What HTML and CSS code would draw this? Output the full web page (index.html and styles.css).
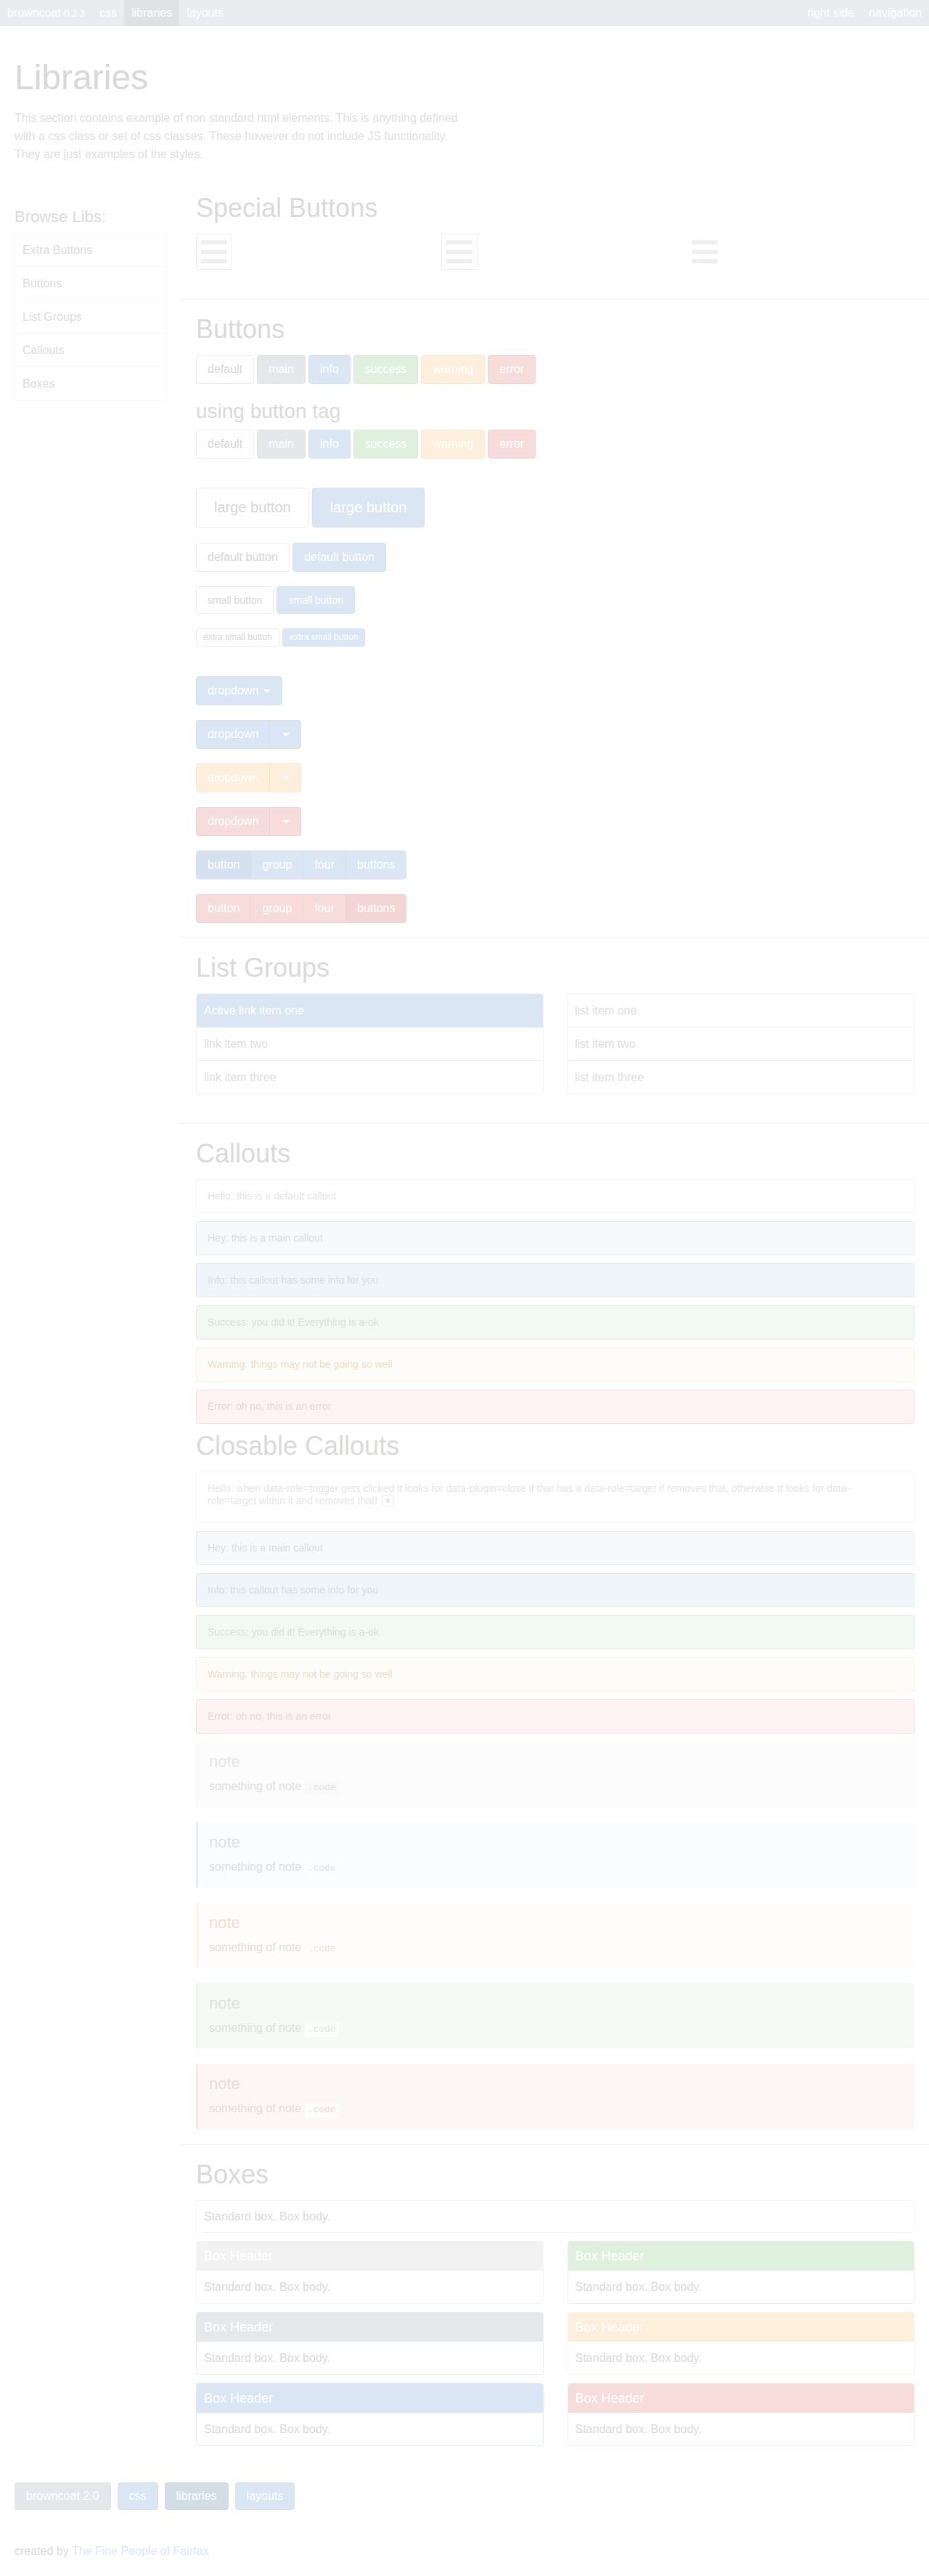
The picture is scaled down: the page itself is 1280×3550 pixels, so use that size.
FILE: index.html
```html
<!DOCTYPE html>
<html lang="en">
<head>
<meta charset="utf-8">
<title>Libraries - browncoat</title>
<link rel="stylesheet" href="styles.css">
</head>
<body>
<nav class="topbar">
  <div class="nav-group">
    <a class="nav-item brand" href="#">browncoat <small>0.2.3</small></a>
    <a class="nav-item" href="#">css</a>
    <a class="nav-item active" href="#">libraries</a>
    <a class="nav-item" href="#">layouts</a>
  </div>
  <div class="nav-group">
    <a class="nav-item" href="#">right side</a>
    <a class="nav-item" href="#">navigation</a>
  </div>
</nav>

<header class="intro">
  <h1 class="page-title">Libraries</h1>
  <p class="lead">This section contains example of non standard html elements. This is anything defined with a css class or set of css classes. These however do not include JS functionality. They are just examples of the styles.</p>
</header>

<div class="layout">
  <aside class="sidebar">
    <h3 class="side-title">Browse Libs:</h3>
    <ul class="side-list">
      <li><a href="#">Extra Buttons</a></li>
      <li><a href="#">Buttons</a></li>
      <li><a href="#">List Groups</a></li>
      <li><a href="#">Callouts</a></li>
      <li><a href="#">Boxes</a></li>
    </ul>
  </aside>

  <main class="content">
    <section class="section sec-special">
      <h2 class="sec-title">Special Buttons</h2>
      <div class="icon-row">
        <div class="icon-cell"><span class="burger bordered"><i></i><i></i><i></i></span></div>
        <div class="icon-cell"><span class="burger bordered"><i></i><i></i><i></i></span></div>
        <div class="icon-cell"><span class="burger"><i></i><i></i><i></i></span></div>
      </div>
    </section>

    <section class="section sec-buttons">
      <h2 class="sec-title">Buttons</h2>
      <div class="btn-row row-first">
        <a class="btn" href="#">default</a>
        <a class="btn btn-main" href="#">main</a>
        <a class="btn btn-info" href="#">info</a>
        <a class="btn btn-success" href="#">success</a>
        <a class="btn btn-warning" href="#">warning</a>
        <a class="btn btn-error" href="#">error</a>
      </div>
      <h3 class="sub-title">using button tag</h3>
      <div class="btn-row row-tag">
        <button class="btn">default</button>
        <button class="btn btn-main">main</button>
        <button class="btn btn-info">info</button>
        <button class="btn btn-success">success</button>
        <button class="btn btn-warning">warning</button>
        <button class="btn btn-error">error</button>
      </div>
      <div class="btn-row row-lg">
        <a class="btn btn-lg" href="#">large button</a>
        <a class="btn btn-lg btn-info" href="#">large button</a>
      </div>
      <div class="btn-row">
        <a class="btn" href="#">default button</a>
        <a class="btn btn-info" href="#">default button</a>
      </div>
      <div class="btn-row">
        <a class="btn btn-sm" href="#">small button</a>
        <a class="btn btn-sm btn-info" href="#">small button</a>
      </div>
      <div class="btn-row row-xs">
        <a class="btn btn-xs" href="#">extra small button</a>
        <a class="btn btn-xs btn-info" href="#">extra small button</a>
      </div>
      <div class="btn-row">
        <a class="btn btn-info" href="#">dropdown <span class="caret"></span></a>
      </div>
      <div class="btn-row">
        <div class="split split-info">
          <a class="seg" href="#">dropdown</a><a class="seg seg-caret" href="#"><span class="caret"></span></a>
        </div>
      </div>
      <div class="btn-row">
        <div class="split split-warning">
          <a class="seg" href="#">dropdown</a><a class="seg seg-caret" href="#"><span class="caret"></span></a>
        </div>
      </div>
      <div class="btn-row">
        <div class="split split-error">
          <a class="seg" href="#">dropdown</a><a class="seg seg-caret" href="#"><span class="caret"></span></a>
        </div>
      </div>
      <div class="btn-row">
        <div class="split split-info">
          <a class="seg on" href="#">button</a><a class="seg" href="#">group</a><a class="seg" href="#">four</a><a class="seg" href="#">buttons</a>
        </div>
      </div>
      <div class="btn-row row-last">
        <div class="split split-error">
          <a class="seg" href="#">button</a><a class="seg" href="#">group</a><a class="seg" href="#">four</a><a class="seg on" href="#">buttons</a>
        </div>
      </div>
    </section>

    <section class="section sec-lists">
      <h2 class="sec-title">List Groups</h2>
      <div class="two-col">
        <div class="list-group">
          <a class="lg-item active" href="#">Active link item one</a>
          <a class="lg-item" href="#">link item two</a>
          <a class="lg-item" href="#">link item three</a>
        </div>
        <ul class="list-group">
          <li class="lg-item">list item one</li>
          <li class="lg-item">list item two</li>
          <li class="lg-item">list item three</li>
        </ul>
      </div>
    </section>

    <section class="section sec-callouts">
      <h2 class="sec-title">Callouts</h2>
      <div class="callout">Hello: this is a default callout</div>
      <div class="callout callout-main">Hey: this is a main callout</div>
      <div class="callout callout-info">Info: this callout has some info for you</div>
      <div class="callout callout-success">Success: you did it! Everything is a-ok</div>
      <div class="callout callout-warning">Warning: things may not be going so well</div>
      <div class="callout callout-error">Error: oh no, this is an error</div>

      <h2 class="sec-title">Closable Callouts</h2>
      <div class="callout callout-close">Hello: when data-role=trigger gets clicked it looks for data-plugin=close if that has a data-role=target if removes that, otherwise it looks for data-role=target within it and removes that! <button class="close-btn">x</button></div>
      <div class="callout callout-main">Hey: this is a main callout</div>
      <div class="callout callout-info">Info: this callout has some info for you</div>
      <div class="callout callout-success">Success: you did it! Everything is a-ok</div>
      <div class="callout callout-warning">Warning: things may not be going so well</div>
      <div class="callout callout-error">Error: oh no, this is an error</div>

      <div class="note">
        <h4 class="note-title">note</h4>
        <p class="note-body">something of note <code class="code">.code</code></p>
      </div>
      <div class="note note-info">
        <h4 class="note-title">note</h4>
        <p class="note-body">something of note <code class="code">.code</code></p>
      </div>
      <div class="note note-warning">
        <h4 class="note-title">note</h4>
        <p class="note-body">something of note <code class="code">.code</code></p>
      </div>
      <div class="note note-success">
        <h4 class="note-title">note</h4>
        <p class="note-body">something of note <code class="code">.code</code></p>
      </div>
      <div class="note note-error">
        <h4 class="note-title">note</h4>
        <p class="note-body">something of note <code class="code">.code</code></p>
      </div>
    </section>

    <section class="section sec-boxes">
      <h2 class="sec-title">Boxes</h2>
      <div class="box box-plain"><div class="box-body">Standard box. Box body.</div></div>
      <div class="box-grid">
        <div class="box box-default"><div class="box-head">Box Header</div><div class="box-body">Standard box. Box body.</div></div>
        <div class="box box-success"><div class="box-head">Box Header</div><div class="box-body">Standard box. Box body.</div></div>
        <div class="box box-main"><div class="box-head">Box Header</div><div class="box-body">Standard box. Box body.</div></div>
        <div class="box box-warning"><div class="box-head">Box Header</div><div class="box-body">Standard box. Box body.</div></div>
        <div class="box box-info"><div class="box-head">Box Header</div><div class="box-body">Standard box. Box body.</div></div>
        <div class="box box-error"><div class="box-head">Box Header</div><div class="box-body">Standard box. Box body.</div></div>
      </div>
    </section>
  </main>
</div>

<footer class="footer">
  <div class="foot-btns">
    <a class="fbtn fbtn-main" href="#">browncoat 2.0</a>
    <a class="fbtn fbtn-info" href="#">css</a>
    <a class="fbtn fbtn-dark" href="#">libraries</a>
    <a class="fbtn fbtn-info" href="#">layouts</a>
  </div>
  <p class="credit">created by <a href="#">The Fine People of Fairfax</a></p>
</footer>
</body>
</html>
```

FILE: styles.css
```css
* { box-sizing: border-box; }

html, body {
  margin: 0;
  padding: 0;
  background: #ffffff;
}

body {
  font-family: "Liberation Sans", Arial, Helvetica, sans-serif;
  font-size: 16px;
  color: #dcdcdc;
}

a { text-decoration: none; color: inherit; }

/* top navigation */
.topbar {
  display: flex;
  justify-content: space-between;
  height: 36px;
  background: #ebecef;
}
.nav-group { display: flex; }
.nav-item {
  display: block;
  padding: 0 10px;
  line-height: 36px;
  color: #ffffff;
  font-size: 16px;
}
.nav-item small { font-size: 13px; }
.nav-item.active { background: #e0e1e5; }

/* intro */
.intro { padding: 44px 20px 0; }
.page-title {
  margin: 0;
  font-size: 48px;
  line-height: 53px;
  font-weight: normal;
  color: #d9d9d9;
}
.lead {
  margin: 17px 0 21px;
  width: 630px;
  font-size: 16px;
  line-height: 25px;
  color: #e0e0e0;
}

/* layout */
.layout { display: flex; }
.sidebar {
  width: 250px;
  flex: none;
  padding: 40px 20px 0;
}
.side-title {
  margin: 0 0 9px;
  font-size: 22px;
  line-height: 26px;
  font-weight: normal;
  color: #dadada;
}
.side-list {
  list-style: none;
  margin: 0;
  padding: 0;
  border: 1px solid #f8f8f8;
  border-bottom: 0;
  border-radius: 4px;
}
.side-list li { border-bottom: 1px solid #f8f8f8; }
.side-list a {
  display: block;
  padding: 12px 10px;
  line-height: 21px;
  color: #dcdcdc;
}

.content {
  flex: 1;
  padding: 0 20px;
  min-width: 0;
}
.section {
  margin: 0 -20px;
  padding: 21px 20px 20px;
  border-bottom: 1px solid #f2f2f2;
}
.sec-special { padding-bottom: 40px; }
.sec-lists { padding-bottom: 40px; }
.sec-callouts { padding-bottom: 21px; }
.sec-boxes { border-bottom: 0; padding-bottom: 0; }

.sec-title {
  margin: 0 0 15px;
  font-size: 36px;
  line-height: 40px;
  font-weight: normal;
  color: #dadada;
}
.sub-title {
  margin: 0 0 9px;
  font-size: 28px;
  line-height: 32px;
  font-weight: normal;
  color: #dadada;
}

/* special buttons */
.icon-row {
  display: grid;
  grid-template-columns: repeat(3, 1fr);
  column-gap: 24px;
}
.burger {
  display: flex;
  flex-direction: column;
  justify-content: center;
  gap: 7px;
  width: 50px;
  height: 50px;
  padding: 0 6px;
  border: 1px solid transparent;
}
.burger.bordered { border-color: #eeeeee; }
.burger i {
  display: block;
  height: 6px;
  background: #efefef;
}

/* buttons */
.btn-row {
  display: flex;
  align-items: flex-start;
  gap: 4px;
  margin-bottom: 20px;
}
.row-first { margin-bottom: 22px; }
.row-tag { margin-bottom: 40px; }
.row-lg { margin-bottom: 21px; }
.row-xs { margin-bottom: 41px; }
.row-last { margin-bottom: 0; }

.btn {
  display: inline-block;
  padding: 8px 15px;
  font-family: "Liberation Sans", Arial, Helvetica, sans-serif;
  font-size: 16px;
  line-height: 22px;
  border: 1px solid #ececec;
  border-radius: 4px;
  background: #ffffff;
  color: #d6d6d6;
  white-space: nowrap;
  margin: 0;
}
.btn-main { background: #e6e7eb; border-color: #e2e3e7; color: #ffffff; }
.btn-info { background: #dae6f3; border-color: #d5e2f0; color: #ffffff; }
.btn-success { background: #dff0de; border-color: #d8ecd7; color: #ffffff; }
.btn-warning { background: #fcefdc; border-color: #f9e8d0; color: #ffffff; }
.btn-error { background: #f7dcdc; border-color: #f3d3d3; color: #ffffff; }

.btn-lg { padding: 13px 24px; font-size: 20px; line-height: 27px; }
.btn-sm { padding: 8px 15px; font-size: 14px; line-height: 20px; }
.btn-xs { padding: 4px 9px; font-size: 12px; line-height: 15px; border-radius: 3px; }

.caret {
  display: inline-block;
  width: 0;
  height: 0;
  margin-left: 2px;
  vertical-align: middle;
  border-left: 5px solid transparent;
  border-right: 5px solid transparent;
  border-top: 5px solid #ffffff;
}

.split {
  display: inline-flex;
  border-radius: 4px;
  overflow: hidden;
  border: 1px solid;
}
.seg {
  display: block;
  padding: 8px 15px;
  line-height: 22px;
  color: #ffffff;
  border-left: 1px solid;
}
.seg:first-child { border-left: 0; }
.split-info { background: #dae6f3; border-color: #d5e2f0; }
.split-info .seg { border-left-color: #d3dfec; }
.split-info .seg:first-child { border-left: 0; }
.split-info .seg.on { background: #d5e1ee; }
.split-warning { background: #fcefdc; border-color: #f9e8d0; }
.split-warning .seg { border-left-color: #f8e6cf; }
.split-warning .seg:first-child { border-left: 0; }
.split-error { background: #f7dcdc; border-color: #f3d3d3; }
.split-error .seg { border-left-color: #f1d2d2; }
.split-error .seg:first-child { border-left: 0; }
.split-error .seg.on { background: #f3d5d5; }

/* list groups */
.two-col {
  display: grid;
  grid-template-columns: 1fr 1fr;
  column-gap: 32px;
}
.list-group {
  display: flex;
  flex-direction: column;
  margin: 0;
  padding: 0;
  list-style: none;
  border: 1px solid #f3f3f3;
  border-radius: 4px;
  overflow: hidden;
}
.lg-item {
  display: block;
  padding: 12px 10px;
  line-height: 21px;
  border-bottom: 1px solid #f3f3f3;
  color: #dedede;
}
.lg-item:last-child { border-bottom: 0; height: 45px; }
.lg-item.active { background: #dae6f3; color: #ffffff; border-bottom-color: #dae6f3; }

/* callouts */
.callout {
  margin-bottom: 11px;
  padding: 14px 15px;
  font-size: 14px;
  line-height: 17px;
  border: 1px solid #f4f4f4;
  border-radius: 3px;
  background: #ffffff;
  color: #e4e4e4;
}
.callout-main { background: #f8f9fa; border-color: #ebecef; color: #dcdcdc; }
.callout-info { background: #f0f5fa; border-color: #dfe9f4; color: #dadcdf; }
.callout-success { background: #f2f9f2; border-color: #e1efe0; color: #dcdedc; }
.callout-warning { background: #fefcf9; border-color: #fcefdf; color: #efdcc6; }
.callout-error { background: #fef3f3; border-color: #f8dfdf; color: #e6d8d8; }

.callout-close {
  padding: 14px 60px 21px 15px;
  color: #e6e6e6;
}
.close-btn {
  display: inline-block;
  margin: 0 0 0 2px;
  padding: 0 5px;
  height: 16px;
  font-family: "Liberation Sans", Arial, sans-serif;
  font-size: 10px;
  line-height: 14px;
  vertical-align: text-bottom;
  background: #ffffff;
  color: #cfcfcf;
  border: 1px solid #ececec;
  border-radius: 3px;
}

/* notes */
.note {
  margin-bottom: 21px;
  padding: 15px 15px 16px;
  border-left: 3px solid #f8f8f8;
  background: #fcfcfc;
}
.note:last-child { margin-bottom: 0; }
.note-title {
  margin: 0 0 10px;
  font-size: 22px;
  line-height: 26px;
  font-weight: normal;
  color: #e6e6e6;
}
.note-body {
  margin: 0;
  font-size: 16px;
  line-height: 22px;
  color: #dedede;
}
.code {
  display: inline-block;
  padding: 0 4px;
  font-family: "Liberation Mono", "DejaVu Sans Mono", monospace;
  font-size: 13px;
  line-height: 20px;
  background: #f9f9f9;
  color: #e2e2e2;
}
.note-info { background: #fbfcfe; border-left-color: #e4edf8; }
.note-info .note-title, .note-info .code { color: #dde2e8; }
.note-warning { background: #fffdfb; border-left-color: #fdf3e6; }
.note-warning .note-title, .note-warning .code { color: #efdfcb; }
.note-success { background: #f6faf6; border-left-color: #eaf4ea; }
.note-success .note-title, .note-success .code { color: #dde4dd; }
.note-error { background: #fdf6f6; border-left-color: #f9e6e6; }
.note-error .note-title, .note-error .code { color: #ecdada; }
.note-info .code, .note-warning .code, .note-success .code, .note-error .code { background: #fdfdfd; }

/* boxes */
.box {
  border: 1px solid #f4f4f4;
  border-radius: 4px;
  overflow: hidden;
  background: #ffffff;
}
.box-plain { margin-bottom: 11px; }
.box-plain .box-body { padding: 12px 10px; line-height: 19px; }
.box-head {
  padding: 10px 10px 9px;
  font-size: 18px;
  line-height: 21px;
  color: #ffffff;
}
.box-body {
  padding: 12px 10px;
  line-height: 21px;
  color: #dadada;
}
.box-grid {
  display: grid;
  grid-template-columns: 1fr 1fr;
  column-gap: 33px;
  row-gap: 11px;
}
.box-default { border-color: #f4f4f4; }
.box-default .box-head { background: #f2f2f2; }
.box-main { border-color: #ebecef; }
.box-main .box-head { background: #e7e8eb; }
.box-info { border-color: #e2ebf5; }
.box-info .box-head { background: #dae6f3; }
.box-success { border-color: #ececec; }
.box-success .box-head { background: #dff0de; }
.box-warning { border-color: #fbf3ea; }
.box-warning .box-head { background: #fcefdc; }
.box-error { border-color: #f6eaea; }
.box-error .box-head { background: #f7dcdc; }

/* footer */
.footer { padding: 50px 20px 20px; }
.foot-btns { display: flex; gap: 9px; }
.fbtn {
  display: block;
  padding: 8px 15px;
  line-height: 20px;
  border: 1px solid;
  border-radius: 4px;
  color: #ffffff;
}
.fbtn-main { background: #e6e7eb; border-color: #e2e3e7; }
.fbtn-info { background: #dae6f3; border-color: #d5e2f0; }
.fbtn-dark { background: #d3dde6; border-color: #cfd9e3; }
.credit {
  margin: 46px 0 0;
  line-height: 22px;
  color: #dadada;
}
.credit a { color: #dce7f3; }
```
